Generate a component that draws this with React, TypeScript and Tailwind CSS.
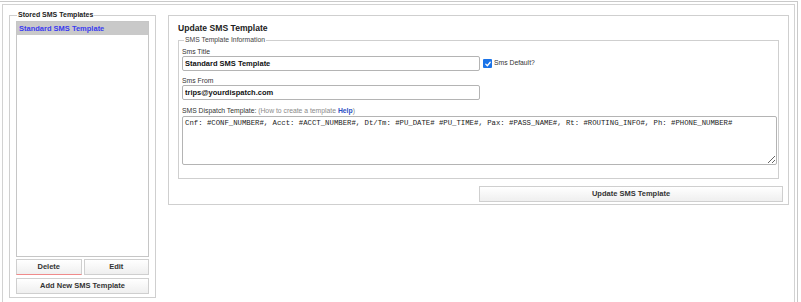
import React from "react";

const sans = "font-['Liberation_Sans',Arial,sans-serif]";

function CheckIcon(props: any) {
  return (
    <svg {...props} viewBox="0 0 10 10" fill="none" stroke="white" strokeWidth="1.6" strokeLinecap="round" strokeLinejoin="round">
      <path d="M2.2 5.2 4.2 7.2 7.8 2.8" />
    </svg>
  );
}

function SmallButton({ children, className = "" }: { children: React.ReactNode; className?: string }) {
  return (
    <button
      className={`h-[16px] border border-[#cfcfcf] bg-gradient-to-b from-white to-[#efefef] text-[7.5px] font-bold leading-none text-[#333] ${className}`}
    >
      {children}
    </button>
  );
}

export default function App() {
  return (
    <div className={`h-[302px] overflow-hidden bg-white ${sans}`}>
      <div className="mr-[3px] mt-px h-[320px] border-t border-r border-[#c9c9c9]">
        <div className="ml-[2px] mr-[2px] mt-[2px] flex h-[320px] items-start border-t border-l border-r border-[#d2d2d2]">
          {/* stored templates */}
          <fieldset className="ml-[6px] mt-[5px] flex w-[147px] flex-col border border-[#cfcfcf] px-[6px] pb-[3px]">
            <legend className="ml-[1px] px-[1px] text-[7px] font-bold leading-[10px] text-[#222]">Stored SMS Templates</legend>
            <div className="mt-px h-[236px] border border-[#c6c6c6] bg-white">
              <div className="h-[13px] bg-[#c9c9c9] pl-[2px] text-[7.5px] font-bold leading-[13px] text-[#3a3af0]">
                Standard SMS Template
              </div>
            </div>
            <div className="mt-[2px] grid grid-cols-2 gap-[2px]">
              <SmallButton className="border-b-[#f08a8a]">Delete</SmallButton>
              <SmallButton>Edit</SmallButton>
            </div>
            <SmallButton className="mt-[3px] w-full">Add New SMS Template</SmallButton>
          </fieldset>

          {/* update panel */}
          <div className="ml-[12px] mr-[5px] mt-[10px] flex flex-1 flex-col border border-[#cfcfcf] pb-[2px] pl-[9px] pr-[5px] pt-[7px]">
            <h2 className="text-[8.6px] font-bold leading-[11px] text-[#222]">Update SMS Template</h2>
            <fieldset className="mr-[4px] mt-[2px] border border-[#cfcfcf] pb-[13px] pl-[3px] pr-px">
              <legend className="ml-[2px] px-px text-[6.8px] leading-[8px] text-[#444]">SMS Template Information</legend>

              <label className="mt-[3px] block text-[6.8px] leading-[9px] text-[#333]">Sms Title</label>
              <div className="flex items-center">
                <input
                  defaultValue="Standard SMS Template"
                  className="block h-[15px] w-[298px] rounded-[2px] border border-[#b4b4b4] px-[2px] text-[7.5px] font-bold text-[#111] outline-none"
                />
                <span className="ml-[3px] flex h-[9px] w-[9px] items-center justify-center rounded-[1px] bg-[#1a73e8]">
                  <CheckIcon className="h-[8px] w-[8px]" />
                </span>
                <span className="ml-[2px] text-[6.8px] text-[#333]">Sms Default?</span>
              </div>

              <label className="mt-[5px] block text-[6.8px] leading-[9px] text-[#333]">Sms From</label>
              <input
                defaultValue="trips@yourdispatch.com"
                className="block h-[15px] w-[298px] rounded-[2px] border border-[#b4b4b4] px-[2px] text-[7.5px] font-bold text-[#111] outline-none"
              />

              <div className="mt-[6px] text-[6.8px] leading-[9px] text-[#333]">
                SMS Dispatch Template: <span className="text-[#8a8a8a]">(How to create a template </span>
                <span className="font-bold text-[#2b4fc4]">Help</span>
                <span className="text-[#8a8a8a]">)</span>
              </div>
              <textarea
                defaultValue="Cnf: #CONF_NUMBER#, Acct: #ACCT_NUMBER#, Dt/Tm: #PU_DATE# #PU_TIME#, Pax: #PASS_NAME#, Rt: #ROUTING_INFO#, Ph: #PHONE_NUMBER#"
                className="mt-px block h-[49px] w-full rounded-[2px] border border-[#b4b4b4] px-[2px] pt-px font-['Liberation_Mono',monospace] text-[7.3px] leading-[10px] text-[#1a1a1a] outline-none"
              />
            </fieldset>
            <div className="mt-[7px] flex justify-end">
              <SmallButton className="w-[304px]">Update SMS Template</SmallButton>
            </div>
          </div>
        </div>
      </div>
    </div>
  );
}
